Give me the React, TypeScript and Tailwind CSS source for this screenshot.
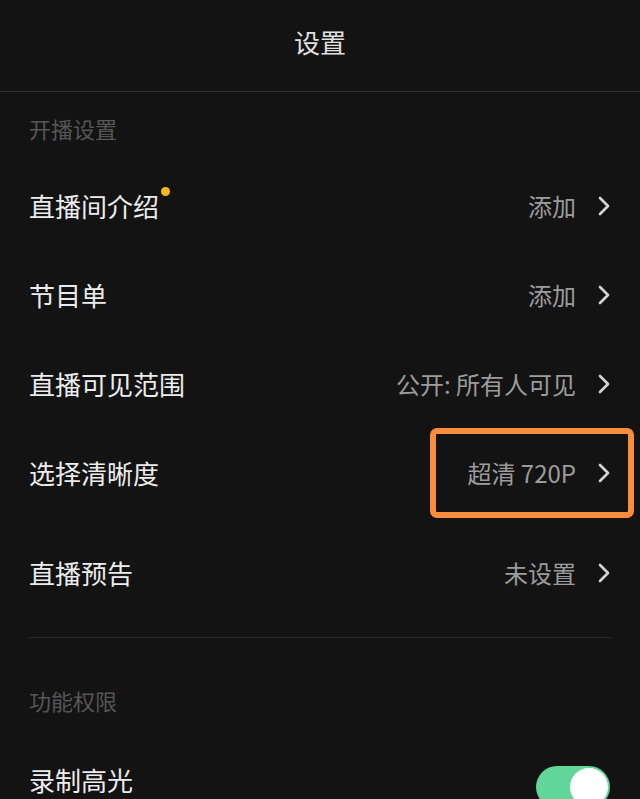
import React from "react";

const font = { fontFamily: '"Noto Sans CJK SC", "Noto Sans", sans-serif' };

function Chevron() {
  return (
    <svg width="14" height="22" viewBox="0 0 14 22" fill="none" className="shrink-0">
      <path d="M3 3 L11 11 L3 19" stroke="#d4d4d4" strokeWidth="2.6" strokeLinecap="round" strokeLinejoin="round" />
    </svg>
  );
}

type RowProps = {
  label: string;
  value?: string;
  dot?: boolean;
  highlight?: boolean;
  height: string;
};

function Row({ label, value, dot, highlight, height }: RowProps) {
  return (
    <div className={`relative flex items-center justify-between pl-[29px] pr-[29px] ${height}`}>
      <span className="relative text-[26px] leading-none text-[#ececec]">
        {label}
        {dot && <span className="absolute -right-[11px] -top-[6px] h-[9px] w-[9px] rounded-full bg-[#f5b71b]" />}
      </span>
      <div className="flex items-center gap-[21px]">
        <span className="text-[24px] leading-none text-[#9c9c9c]">{value}</span>
        <Chevron />
      </div>
      {highlight && (
        <div className="absolute left-[430px] top-[-3px] h-[90px] w-[204px] rounded-[7px] border-[6px] border-[#fa8d3c]" />
      )}
    </div>
  );
}

export default function App() {
  return (
    <div style={font} className="h-[799px] w-[640px] overflow-hidden bg-[#131313]">
      {/* Header */}
      <div className="flex h-[92px] items-center justify-center border-b border-[#333333] pb-[7px]">
        <span className="text-[26px] leading-none text-[#e0e0e0]">设置</span>
      </div>

      {/* 开播设置 */}
      <div className="flex h-[72px] items-center pl-[29px]">
        <span className="text-[22px] leading-none text-[#565656]">开播设置</span>
      </div>
      <Row label="直播间介绍" value="添加" dot height="h-[89px] pb-[6px]" />
      <Row label="节目单" value="添加" height="h-[89px] pb-[6px]" />
      <Row label="直播可见范围" value="公开: 所有人可见" height="h-[89px] pb-[6px]" />
      <Row label="选择清晰度" value="超清 720P" highlight height="h-[89px] pb-[6px]" />
      <Row label="直播预告" value="未设置" height="h-[110px] pb-[4px]" />

      <div className="mx-[29px] mt-[7px] h-px bg-[#272727]" />

      {/* 功能权限 */}
      <div className="flex h-[130px] items-center pl-[29px] pb-[6px]">
        <span className="text-[22px] leading-none text-[#565656]">功能权限</span>
      </div>
      <div className="flex items-start justify-between pl-[29px] pr-[30px]">
        <span className="-mt-[1px] text-[26px] leading-none text-[#ececec]">录制高光</span>
        <div className="-mt-[2px] flex h-[42px] w-[74px] items-center justify-end rounded-full bg-[#62d59b] pr-[2px]">
          <div className="h-[38px] w-[38px] rounded-full bg-white" />
        </div>
      </div>
    </div>
  );
}
